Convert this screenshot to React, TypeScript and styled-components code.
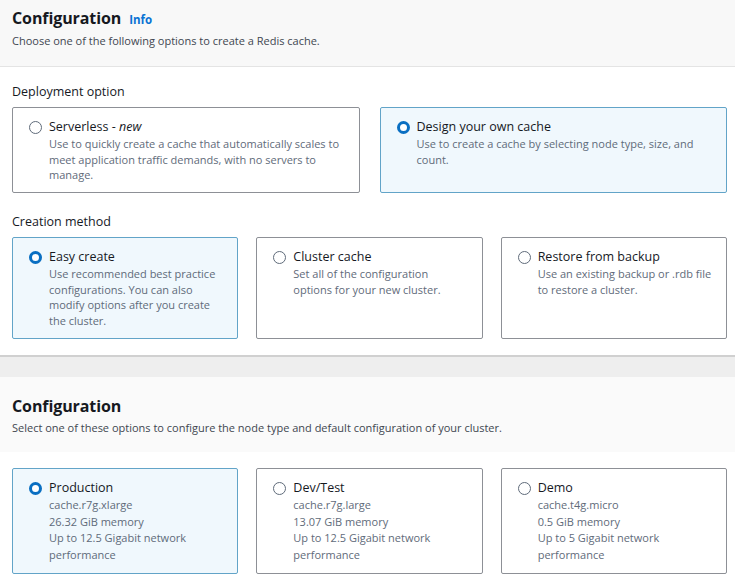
import React from "react";
import styled, { createGlobalStyle } from "styled-components";

const Global = createGlobalStyle`
  html, body { margin: 0; padding: 0; background: #ffffff; }
  body { font-family: "Open Sans", "Noto Sans", Arial, sans-serif; color: #16191f; width: 735px; overflow: hidden; }
  * { box-sizing: border-box; }
`;

const Page = styled.div`
  width: 735px;
  height: 585px;
  display: flex;
  flex-direction: column;
  background: #fff;
`;

const Header = styled.div`
  background: #f8f8f8;
  border-bottom: 1px solid #e4e4e4;
  height: 67px;
  padding: 6px 12px 0;
`;

const TitleRow = styled.div`
  display: flex;
  align-items: baseline;
  gap: 8px;
`;

const Title = styled.h2`
  margin: 0;
  font-size: 16px;
  line-height: 24px;
  font-weight: 700;
  color: #16191f;
  letter-spacing: -0.1px;
`;

const Info = styled.span`
  font-size: 11.5px;
  font-weight: 700;
  color: #0972d3;
`;

const Sub = styled.p<{ $top?: number }>`
  margin: 0;
  font-size: 11px;
  line-height: 16px;
  color: #414750;
  margin-top: ${(p) => p.$top ?? 3}px;
`;

const Section = styled.div`
  padding: 16px 8px 0 12px;
  display: flex;
  flex-direction: column;
`;

const GroupLabel = styled.div<{ $top?: number }>`
  font-size: 12.5px;
  line-height: 18px;
  color: #16191f;
  margin-top: ${(p) => p.$top ?? 0}px;
  margin-bottom: 6px;
`;

const Grid = styled.div<{ $cols: number; $h: number; $gap: number }>`
  display: grid;
  grid-template-columns: repeat(${(p) => p.$cols}, 1fr);
  column-gap: ${(p) => p.$gap}px;
  height: ${(p) => p.$h}px;
`;

const Card = styled.div<{ $on?: boolean }>`
  border: 1px solid ${(p) => (p.$on ? "#62a4c8" : "#8d9096")};
  background: ${(p) => (p.$on ? "#f0f8fd" : "#ffffff")};
  border-radius: 2px;
  padding: 10px 12px 0 16px;
  display: flex;
  gap: 7px;
  align-items: flex-start;
`;

const Radio = styled.span<{ $on?: boolean }>`
  flex: none;
  width: 13px;
  height: 13px;
  margin-top: 3px;
  border-radius: 50%;
  border: ${(p) => (p.$on ? "3.5px solid #0a6fc2" : "1.2px solid #5f6b7a")};
  background: #fff;
`;

const Body = styled.div`
  display: flex;
  flex-direction: column;
`;

const CardTitle = styled.div`
  font-size: 12.5px;
  line-height: 18px;
  color: #16191f;
  em { font-style: italic; }
`;

const Desc = styled.div<{ $lh?: number }>`
  font-size: 11px;
  line-height: ${(p) => p.$lh ?? 15.5}px;
  color: #5f6b7a;
`;

const Divider = styled.div`
  margin-top: 16px;
  border-top: 2px solid #d0d0d0;
  height: 22px;
  background: #eeeeee;
`;

const Header2 = styled.div`
  background: #fafafa;
  height: 75px;
  padding: 17px 12px 0;
`;

const Section2 = styled.div`
  padding: 16px 8px 0 12px;
`;

type Opt = { title: React.ReactNode; desc: string[]; on?: boolean };

const deploy: Opt[] = [
  { title: <>Serverless - <em>new</em></>, desc: ["Use to quickly create a cache that automatically scales to meet application traffic demands, with no servers to manage."] },
  { title: "Design your own cache", desc: ["Use to create a cache by selecting node type, size, and count."], on: true },
];

const creation: Opt[] = [
  { title: "Easy create", desc: ["Use recommended best practice configurations. You can also modify options after you create the cluster."], on: true },
  { title: "Cluster cache", desc: ["Set all of the configuration options for your new cluster."] },
  { title: "Restore from backup", desc: ["Use an existing backup or .rdb file to restore a cluster."] },
];

const configs: Opt[] = [
  { title: "Production", desc: ["cache.r7g.xlarge", "26.32 GiB memory", "Up to 12.5 Gigabit network performance"], on: true },
  { title: "Dev/Test", desc: ["cache.r7g.large", "13.07 GiB memory", "Up to 12.5 Gigabit network performance"] },
  { title: "Demo", desc: ["cache.t4g.micro", "0.5 GiB memory", "Up to 5 Gigabit network performance"] },
];

const OptionCard = ({ o, lh }: { o: Opt; lh?: number }) => (
  <Card $on={o.on}>
    <Radio $on={o.on} />
    <Body>
      <CardTitle>{o.title}</CardTitle>
      {o.desc.map((d, i) => (
        <Desc key={i} $lh={lh}>{d}</Desc>
      ))}
    </Body>
  </Card>
);

export default function App() {
  return (
    <Page>
      <Global />
      <Header>
        <TitleRow>
          <Title>Configuration</Title>
          <Info>Info</Info>
        </TitleRow>
        <Sub>Choose one of the following options to create a Redis cache.</Sub>
      </Header>
      <Section>
        <GroupLabel>Deployment option</GroupLabel>
        <Grid $cols={2} $h={86} $gap={20}>
          {deploy.map((o, i) => <OptionCard key={i} o={o} />)}
        </Grid>
        <GroupLabel $top={20}>Creation method</GroupLabel>
        <Grid $cols={3} $h={102} $gap={18}>
          {creation.map((o, i) => <OptionCard key={i} o={o} />)}
        </Grid>
      </Section>
      <Divider />
      <Header2>
        <Title>Configuration</Title>
        <Sub $top={2}>Select one of these options to configure the node type and default configuration of your cluster.</Sub>
      </Header2>
      <Section2>
        <Grid $cols={3} $h={106} $gap={18}>
          {configs.map((o, i) => <OptionCard key={i} o={o} lh={16.5} />)}
        </Grid>
      </Section2>
    </Page>
  );
}
